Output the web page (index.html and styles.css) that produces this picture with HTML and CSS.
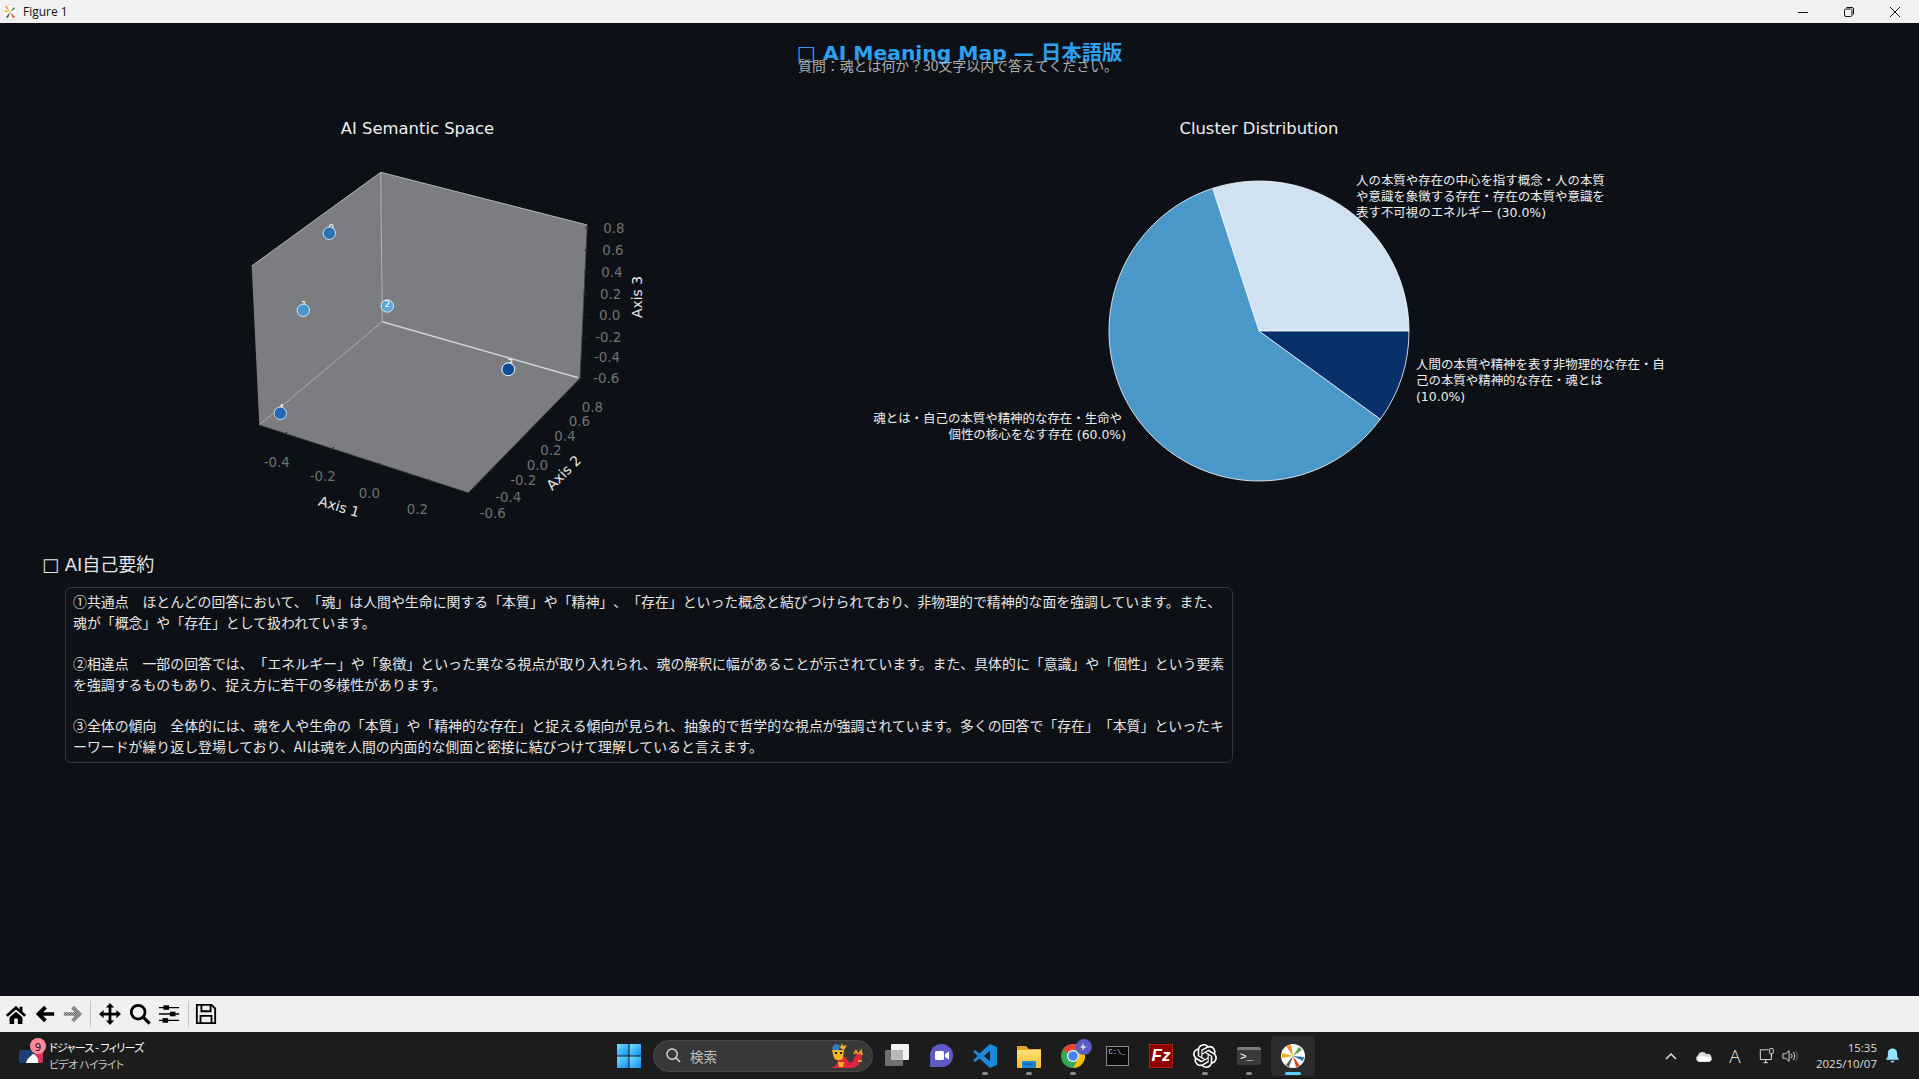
FILE: index.html
```html
<!DOCTYPE html>
<html lang="ja">
<head>
    <meta charset="UTF-8">
    <meta name="viewport" content="width=device-width, initial-scale=1.0">
    <title>Figure 1</title>
    <link rel="stylesheet" href="styles.css">
</head>
<body>
<div class="window">
    <header class="titlebar">
        <svg class="app-icon" viewBox="0 0 16 16">
            <circle cx="8" cy="8" r="7.5" fill="#fff" stroke="#ccc" stroke-width="0.5"/>
            <path d="M8 8 L3 3 L5 2 Z" fill="#f28c1e"/>
            <path d="M8 8 L2 8 L3 6 Z" fill="#e8b21c"/>
            <path d="M8 8 L13 13 L11 14 Z" fill="#d9421c"/>
            <path d="M8 8 L12 3 L13 5 Z" fill="#3c8f3c"/>
            <path d="M8 8 L6 14 L4 13 Z" fill="#444"/>
        </svg>
        <span class="titlebar-name">Figure 1</span>
        <div class="window-controls">
            <div class="window-btn"><svg viewBox="0 0 10 10"><path d="M0 5.5 H10" stroke="#111"/></svg></div>
            <div class="window-btn"><svg viewBox="0 0 10 10"><rect x="0.5" y="2" width="7.5" height="7.5" rx="1.5" fill="none" stroke="#111"/><path d="M2.5 0.5 H8 a1.5 1.5 0 0 1 1.5 1.5 V7.5" fill="none" stroke="#111"/></svg></div>
            <div class="window-btn"><svg viewBox="0 0 10 10"><path d="M0 0 L10 10 M10 0 L0 10" stroke="#111"/></svg></div>
        </div>
    </header>

    <main class="figure">
        <h1 class="fig-title">□ AI Meaning Map — 日本語版</h1>
        <p class="fig-question">質問&#xFF1A;魂とは何か&#xFF1F;30文字以内で答えてください。</p>

        <div class="plots">
            <section class="plot plot-space">
                <h2 class="plot-title">AI Semantic Space</h2>
                <svg class="plot-svg" viewBox="0 140 835 385">
                    <!-- panes -->
                    <polygon class="pane" points="380.7,172.3 251.7,266 259.3,425 382.3,321.7"/>
                    <polygon class="pane" points="380.7,172.3 587.3,225 580,378.3 382.3,321.7"/>
                    <polygon class="pane" points="382.3,321.7 259.3,425 468.3,492.7 580,378.3"/>
                    <path class="edge" d="M380.7 172.3 L251.7 266 M380.7 172.3 L587.3 225 M380.7 172.3 L382.3 321.7 M382.3 321.7 L259.3 425"/>
                    <path class="edge edge-floor" d="M382.3 321.7 L580 378.3"/>
                    <path class="axis-dark" d="M587.3 225 L580 378.3 L468.3 492.7 L259.3 425"/>
                    <!-- ticks -->
                    <path class="tick" d="M585 228 H590 M584.5 250 H589.5 M584 272 H589 M583.5 294 H588.5 M583 315 H588 M582 337 H587 M581.5 358 H586.5 M578 378 H585"/>
                    <path class="tick" d="M478 485 l-3 3 M493 469 l-3 3 M508 454 l-3 3 M523 439 l-3 3 M538 424 l-3 3 M553 409 l-3 3 M567 394 l-3 3 M581 380 l-3 3"/>
                    <path class="tick" d="M287 432 l-3 3 M334 447 l-3 3 M380 463 l-3 3 M429 479 l-3 3"/>
                    <!-- tick labels -->
                    <text class="tick-label" x="614" y="232.5">0.8</text>
                    <text class="tick-label" x="613" y="254.5">0.6</text>
                    <text class="tick-label" x="612" y="276.5">0.4</text>
                    <text class="tick-label" x="610.7" y="298.5">0.2</text>
                    <text class="tick-label" x="609.7" y="319.5">0.0</text>
                    <text class="tick-label" x="608.3" y="341.5">-0.2</text>
                    <text class="tick-label" x="607" y="361.8">-0.4</text>
                    <text class="tick-label" x="606.3" y="382.5">-0.6</text>
                    <text class="tick-label" x="592.3" y="411.8">0.8</text>
                    <text class="tick-label" x="579.3" y="426.2">0.6</text>
                    <text class="tick-label" x="565" y="440.5">0.4</text>
                    <text class="tick-label" x="551" y="454.5">0.2</text>
                    <text class="tick-label" x="537.3" y="469.5">0.0</text>
                    <text class="tick-label" x="523.3" y="485.2">-0.2</text>
                    <text class="tick-label" x="508.3" y="501.8">-0.4</text>
                    <text class="tick-label" x="492.7" y="517.8">-0.6</text>
                    <text class="tick-label" x="276.7" y="466.8">-0.4</text>
                    <text class="tick-label" x="322.7" y="481.2">-0.2</text>
                    <text class="tick-label" x="369.3" y="497.8">0.0</text>
                    <text class="tick-label" x="417.3" y="513.5">0.2</text>
                    <!-- axis labels -->
                    <text class="axis-label" transform="translate(339 507) rotate(17)" y="4.5">Axis 1</text>
                    <text class="axis-label" transform="translate(564 473) rotate(-45)" y="4.5">Axis 2</text>
                    <text class="axis-label" transform="translate(637 297) rotate(-90)" y="4.5">Axis 3</text>
                    <!-- points -->
                    <text class="point-label" x="331" y="231">0</text>
                    <circle class="point" cx="329.3" cy="233.3" r="6.2" fill="#2b72b5"/>
                    <text class="point-label" x="304" y="308">1</text>
                    <circle class="point" cx="303.3" cy="310.3" r="6.2" fill="#4b97cb"/>
                    <circle class="point" cx="387.3" cy="306" r="6.2" fill="#5aa5d3"/>
                    <text class="point-label" x="387.3" y="306.5">2</text>
                    <text class="point-label" x="510" y="366">3</text>
                    <circle class="point point-strong" cx="508.3" cy="369.3" r="6.4" fill="#084d96"/>
                    <text class="point-label" x="281" y="411">4</text>
                    <circle class="point" cx="280.3" cy="413.3" r="6.2" fill="#1f6ab0"/>
                </svg>
            </section>

            <section class="plot plot-pie">
                <h2 class="plot-title">Cluster Distribution</h2>
                <svg class="plot-svg" viewBox="835 140 848 385">
                    <path class="slice" fill="#d0e1f2" d="M1259 331 L1409 331 A150 150 0 0 0 1212.65 188.34 Z"/>
                    <path class="slice" fill="#4a98c9" d="M1259 331 L1212.65 188.34 A150 150 0 1 0 1380.35 419.17 Z"/>
                    <path class="slice" fill="#08306b" d="M1259 331 L1380.35 419.17 A150 150 0 0 0 1409 331 Z"/>
                    <text class="pie-label">
                        <tspan x="1356" y="184.5">人の本質や存在の中心を指す概念・人の本質</tspan>
                        <tspan x="1356" y="200.8">や意識を象徴する存在・存在の本質や意識を</tspan>
                        <tspan x="1356" y="217">表す不可視のエネルギー (30.0%)</tspan>
                    </text>
                    <text class="pie-label">
                        <tspan x="1416" y="368.5">人間の本質や精神を表す非物理的な存在・自</tspan>
                        <tspan x="1416" y="384.5">己の本質や精神的な存在・魂とは</tspan>
                        <tspan x="1416" y="400.5">(10.0%)</tspan>
                    </text>
                    <text class="pie-label pie-label-end">
                        <tspan x="1126" y="423">魂とは・自己の本質や精神的な存在・生命や</tspan>
                        <tspan x="1126" y="439">個性の核心をなす存在 (60.0%)</tspan>
                    </text>
                </svg>
            </section>
        </div>

        <section class="summary">
            <h2 class="summary-title">□ AI自己要約</h2>
            <div class="summary-box">
                <p>①共通点&#x3000;ほとんどの回答において、「魂」は人間や生命に関する「本質」や「精神」、「存在」といった概念と結びつけられており、非物理的で精神的な面を強調しています。また、<br>魂が「概念」や「存在」として扱われています。</p>
                <p>②相違点&#x3000;一部の回答では、「エネルギー」や「象徴」といった異なる視点が取り入れられ、魂の解釈に幅があることが示されています。また、具体的に「意識」や「個性」という要素<br>を強調するものもあり、捉え方に若干の多様性があります。</p>
                <p>③全体の傾向&#x3000;全体的には、魂を人や生命の「本質」や「精神的な存在」と捉える傾向が見られ、抽象的で哲学的な視点が強調されています。多くの回答で「存在」「本質」といったキ<br>ーワードが繰り返し登場しており、AIは魂を人間の内面的な側面と密接に結びつけて理解していると言えます。</p>
            </div>
        </section>
    </main>

    <div class="toolbar">
        <svg width="0" height="0" class="defs">
            <defs>
                <pattern id="dither" width="2" height="2" patternUnits="userSpaceOnUse">
                    <rect width="1" height="1" fill="#222"/>
                    <rect x="1" y="1" width="1" height="1" fill="#222"/>
                </pattern>
                <linearGradient id="winBlue" x1="0" y1="0" x2="1" y2="1">
                    <stop offset="0" stop-color="#6fe0ff"/>
                    <stop offset="1" stop-color="#0f8cf0"/>
                </linearGradient>
                <linearGradient id="folderBody" x1="0" y1="0" x2="0" y2="1">
                    <stop offset="0" stop-color="#ffe27a"/>
                    <stop offset="1" stop-color="#f5bb30"/>
                </linearGradient>
            </defs>
        </svg>
        <div class="tool-group tool-group-nav">
            <svg class="tool" viewBox="0 0 24 24"><path d="M12 3 L1 13 l2 2 L12 7 l9 8 2-2 -4-3.6 V4 h-3 v3 Z M5 15.5 L12 9.5 l7 6 V23 h-5 v-6 h-4 v6 H5 Z"/></svg>
            <svg class="tool" viewBox="0 0 24 24"><path d="M2 12 L11 3 l3 3 -4 4 h12 v4 H10 l4 4 -3 3 Z"/></svg>
            <svg class="tool" viewBox="0 0 24 24"><path fill="url(#dither)" d="M22 12 L13 3 l-3 3 4 4 H2 v4 h12 l-4 4 3 3 Z"/></svg>
        </div>
        <div class="tool-sep"></div>
        <div class="tool-group tool-group-view">
            <svg class="tool" viewBox="0 0 24 24"><path d="M12 0 l4.5 5 h-3 v5.500 h5.500 v-3 l5 4.500 -5 4.500 v-3 h-5.500 v5.500 h3 l-4.500 5 -4.500-5 h3 v-5.500 H5 v3 L0 12 l5-4.500 v3 h5.500 V5 h-3 Z"/></svg>
            <svg class="tool" viewBox="0 0 24 24"><circle cx="10" cy="10" r="7.500" fill="none" stroke="#000" stroke-width="3"/><path d="M15.500 15.500 L22.500 22.500" stroke="#000" stroke-width="3.500"/></svg>
            <svg class="tool" viewBox="0 0 24 24"><path d="M1 5 H23 M1 12 H23 M1 19 H23" stroke="#000" stroke-width="1.500"/><rect x="6" y="2.500" width="6" height="5" /><rect x="13" y="9.500" width="6" height="5"/><rect x="5" y="16.500" width="6" height="5"/></svg>
        </div>
        <div class="tool-sep tool-sep-end"></div>
        <svg class="tool" viewBox="0 0 24 24"><path fill="none" stroke="#000" stroke-width="2" d="M2 2 H18 L22 6 V22 H2 Z"/><path fill="none" stroke="#000" stroke-width="2" d="M7 2 V9 H17 V2 M6 22 V14 H18 V22"/></svg>
    </div>

    <footer class="taskbar">
        <div class="news-widget">
            <div class="news-icon">
                <svg viewBox="0 0 24 14" class="mlb-logo"><rect width="24" height="13" rx="2" fill="#1c3f78"/><path d="M15 0 H22 a2 2 0 0 1 2 2 V11 a2 2 0 0 1 -2 2 H18 Z" fill="#d6335a"/><path d="M7 13 C8 9 10 7 12 6 C13 4 15 3 16 5 C18 7 20 9 19 13 Z" fill="#fff"/></svg>
                <span class="news-badge">9</span>
            </div>
            <div class="news-text">
                <div class="news-line">ドジャース - フィリーズ</div>
                <div class="news-line news-sub">ビデオ ハイライト</div>
            </div>
        </div>

        <div class="task-icons">
            <div class="task-cell">
                <svg class="task-icon" viewBox="0 0 23 23"><rect width="11" height="11" fill="url(#winBlue)"/><rect x="12" width="11" height="11" fill="url(#winBlue)"/><rect y="12" width="11" height="11" fill="url(#winBlue)"/><rect x="12" y="12" width="11" height="11" fill="url(#winBlue)"/></svg>
            </div>
            <div class="search-box">
                <svg class="search-icon" viewBox="0 0 16 16"><circle cx="6.500" cy="6.500" r="5.500" fill="none" stroke="#ddd" stroke-width="1.500"/><path d="M10.500 10.500 L15 15" stroke="#ddd" stroke-width="1.500"/></svg>
                <span class="search-text">検索</span>
                <svg class="search-art" viewBox="0 0 34 26">
                    <path d="M1 25 C7 24 9 21 9 15 L17 14 C18 18 20 20 23 19 C25 18 25 13 28 11 L33 11 C33 18 29 25 22 25 Z" fill="#e0263f"/>
                    <path d="M3 7 H15 L14 15 C12 18 7 18 5 15 Z" fill="#f2b522"/>
                    <path d="M3 5 L6 1 L11 2 L10 7 H4 Z" fill="#2a86c8"/>
                    <path d="M11 5 L13 0 L14 3 L18 2 L15 7 Z" fill="#f2b522"/>
                    <rect x="6" y="9" width="2" height="2" fill="#222"/>
                    <rect x="11" y="9" width="2" height="2" fill="#222"/>
                    <path d="M25 11 l2-3 2 3 M30 11 l2-3 1 4 M29 18 l4 0" stroke="#e89a20" stroke-width="2" fill="none"/>
                    <path d="M9 19 L15 19 L14 24 L10 24 Z" fill="#f2b522"/>
                </svg>
            </div>
            <div class="task-cell">
                <svg class="task-icon" viewBox="0 0 24 24"><rect y="6" width="18" height="16" rx="1" fill="#6f6f6f"/><rect x="6" width="18" height="16" rx="1" fill="#f2f2f2"/><rect x="6" y="6" width="12" height="10" fill="#b9b9b9"/></svg>
            </div>
            <div class="task-cell">
                <svg class="task-icon" viewBox="0 0 24 24"><circle cx="12.500" cy="11.500" r="11.500" fill="#5e5bc4"/><path d="M1 14 V23 H9 Z" fill="#5e5bc4"/><rect x="6" y="7" width="9" height="9" rx="1.500" fill="#fff"/><path d="M16 10 L20 7.500 V15.500 L16 13 Z" fill="#fff"/></svg>
            </div>
            <div class="task-cell is-open">
                <svg class="task-icon" viewBox="0 0 24 24"><path d="M17 0 L24 3 V21 L17 24 L6.500 14.500 L2 18 L0 16.500 L4.500 12 L0 7.500 L2 6 L6.500 9.500 Z M17 6.500 L11 12 L17 17.500 Z" fill="#1a8ad8" fill-rule="evenodd"/></svg>
            </div>
            <div class="task-cell is-open">
                <svg class="task-icon" viewBox="0 0 24 24"><path d="M0 2 H9 L12 5 H24 V9 H0 Z" fill="#e6a520"/><rect y="6" width="24" height="18" rx="1" fill="url(#folderBody)"/><rect x="5" y="17" width="14" height="7" rx="1" fill="#1a88d4"/><rect x="8" y="19.500" width="8" height="1.500" fill="#0f5fa8"/></svg>
            </div>
            <div class="task-cell is-open">
                <svg class="task-icon" viewBox="0 0 24 24"><circle cx="12" cy="12" r="12" fill="#34a853"/><path d="M12 0 A12 12 0 0 1 22.400 6 H12 A6 6 0 0 0 6.800 9 L1.600 6 A12 12 0 0 1 12 0 Z" fill="#ea4335"/><path d="M22.400 6 A12 12 0 0 1 12 24 L17.200 15 A6 6 0 0 0 17.200 9 Z" fill="#fbbc04"/><circle cx="12" cy="12" r="6" fill="#fff"/><circle cx="12" cy="12" r="4.800" fill="#4285f4"/></svg>
                <span class="chrome-badge"><svg class="chrome-spark" viewBox="0 0 8 8"><path d="M3 0 L4 3 L7 4 L4 5 L3 8 L2 5 L0 4 L2 3 Z" fill="#d8d8f5"/></svg></span>
            </div>
            <div class="task-cell">
                <div class="cmd-icon">C:\_</div>
            </div>
            <div class="task-cell">
                <div class="fz-icon">Fz</div>
            </div>
            <div class="task-cell is-open">
                <svg class="task-icon" viewBox="0 0 24 24"><path fill="#fff" d="M22.2819 9.8211a5.9847 5.9847 0 0 0-.5157-4.9108 6.0462 6.0462 0 0 0-6.5098-2.9A6.0651 6.0651 0 0 0 4.9807 4.1818a5.9847 5.9847 0 0 0-3.9977 2.9 6.0462 6.0462 0 0 0 .7427 7.0966 5.98 5.98 0 0 0 .511 4.9107 6.051 6.051 0 0 0 6.5146 2.9001A5.9847 5.9847 0 0 0 13.2599 24a6.0557 6.0557 0 0 0 5.7718-4.2058 5.9894 5.9894 0 0 0 3.9977-2.9001 6.0557 6.0557 0 0 0-.7475-7.0729zm-9.022 12.6081a4.4755 4.4755 0 0 1-2.8764-1.0408l.1419-.0804 4.7783-2.7582a.7948.7948 0 0 0 .3927-.6813v-6.7369l2.02 1.1686a.071.071 0 0 1 .038.052v5.5826a4.504 4.504 0 0 1-4.4945 4.4944zm-9.6607-4.1254a4.4708 4.4708 0 0 1-.5346-3.0137l.142.0852 4.783 2.7582a.7712.7712 0 0 0 .7806 0l5.8428-3.3685v2.3324a.0804.0804 0 0 1-.0332.0615L9.74 19.9502a4.4992 4.4992 0 0 1-6.1408-1.6464zM2.3408 7.8956a4.485 4.485 0 0 1 2.3655-1.9728V11.6a.7664.7664 0 0 0 .3879.6765l5.8144 3.3543-2.0201 1.1685a.0757.0757 0 0 1-.071 0l-4.8303-2.7865A4.504 4.504 0 0 1 2.3408 7.872zm16.5963 3.8558L13.1038 8.364 15.1192 7.2a.0757.0757 0 0 1 .071 0l4.8303 2.7913a4.4944 4.4944 0 0 1-.6765 8.1042v-5.6772a.79.79 0 0 0-.407-.667zm2.0107-3.0231l-.142-.0852-4.7735-2.7818a.7759.7759 0 0 0-.7854 0L9.409 9.2297V6.8974a.0662.0662 0 0 1 .0284-.0615l4.8303-2.7866a4.4992 4.4992 0 0 1 6.6802 4.66zM8.3065 12.863l-2.02-1.1638a.0804.0804 0 0 1-.038-.0567V6.0742a4.4992 4.4992 0 0 1 7.3757-3.4537l-.142.0805L8.704 5.459a.7948.7948 0 0 0-.3927.6813zm1.0976-2.3654l2.602-1.4998 2.6069 1.4998v2.9994l-2.5974 1.4997-2.6067-1.4997Z"/></svg>
            </div>
            <div class="task-cell is-open">
                <div class="term-icon"><span class="term-prompt">&gt;_</span></div>
            </div>
            <div class="task-cell is-active">
                <svg class="task-icon" viewBox="0 0 24 24">
                    <circle cx="12" cy="12" r="12" fill="#fff"/>
                    <path d="M12 12 L5 2 L10 1 Z" fill="#f28c1e"/>
                    <path d="M12 12 L1 9 L1 14 Z" fill="#e8b21c"/>
                    <path d="M12 12 L19 22 L15 23 Z" fill="#d9421c"/>
                    <path d="M12 12 L18 3 L21 6 Z" fill="#5ca04a"/>
                    <path d="M12 12 L8 23 L5 21 Z" fill="#555"/>
                    <path d="M12 12 L23 13 L22 17 Z" fill="#2a6fb5"/>
                </svg>
            </div>
        </div>

        <div class="tray">
            <div class="tray-cell"><svg class="tray-icon" viewBox="0 0 16 16"><path d="M3 11 L8 6 L13 11" fill="none" stroke="#eee" stroke-width="1.400"/></svg></div>
            <div class="tray-cell"><svg class="tray-cloud" viewBox="0 0 18 12"><path d="M4 12 A3.500 3.500 0 0 1 3 5.500 A5 5 0 0 1 12 4 A4 4 0 0 1 17.500 8 L17.500 9 A3 3 0 0 1 14 12 Z" fill="#d8d8d8"/><path d="M4 12 A3.500 3.500 0 0 1 4 6.500 C8 6 12 7 14 7 A3 3 0 0 1 17.500 9 A3 3 0 0 1 14 12 Z" fill="#fff"/></svg></div>
            <div class="tray-cell tray-letter">A</div>
            <div class="tray-net"><svg class="tray-net-icon" viewBox="0 0 18 18" fill="none" stroke="#eee"><path d="M11 2 H1.500 V13 H14 V8"/><path d="M5 16.500 H10 M7.500 13 V16.500"/><rect x="12" y="0.500" width="4" height="6" rx="1"/><path d="M14 6.500 V10"/></svg></div>
            <div class="tray-vol"><svg class="tray-net-icon" viewBox="0 0 18 18" fill="none" stroke="#eee"><path d="M1 6.500 H4 L8 3 V15 L4 11.500 H1 Z"/><path d="M10.500 6.500 A4 4 0 0 1 10.500 11.500 M12.500 4.500 A7 7 0 0 1 12.500 13.500"/><path d="M15 3 A9 9 0 0 1 15 15" stroke="#666"/></svg></div>
            <div class="clock">
                <div>15:35</div>
                <div>2025/10/07</div>
            </div>
            <div class="tray-bell"><svg class="tray-bell-icon" viewBox="0 0 16 16"><path d="M8 0.500 A5 5 0 0 1 13 5.500 V9 L15 12.500 H1 L3 9 V5.500 A5 5 0 0 1 8 0.500 Z" fill="#90e4ff"/><path d="M6 13.500 H10 A2 2 0 0 1 6 13.500 Z" fill="#90e4ff"/></svg></div>
        </div>
    </footer>
</div>
</body>
</html>
```

FILE: styles.css
```css
* {
    box-sizing: border-box;
}
body {
    margin: 0;
    background: #0d1117;
    font-family: "Noto Sans CJK JP", sans-serif;
    text-spacing-trim: space-all;
}
h1, h2, p {
    margin: 0;
    font-weight: normal;
}
.window {
    display: flex;
    flex-direction: column;
    width: 1919px;
    height: 1079px;
    overflow: hidden;
}

/* title bar */
.titlebar {
    display: flex;
    align-items: center;
    height: 23px;
    flex: none;
    background: #f1f1f1;
    padding-left: 2px;
}
.app-icon {
    width: 16px;
    height: 16px;
}
.titlebar-name {
    margin-left: 5px;
    font: 12px "Open Sans", sans-serif;
    color: #111;
}
.window-controls {
    display: flex;
    margin-left: auto;
    margin-right: 1px;
}
.window-btn {
    display: flex;
    justify-content: center;
    align-items: center;
    width: 46px;
    height: 23px;
}
.window-btn svg {
    width: 10px;
    height: 10px;
}

/* figure */
.figure {
    flex: 1;
    min-height: 0;
    background: #0d1117;
}
.fig-title {
    margin-top: 18px;
    height: 24px;
    text-align: center;
    font: bold 20.300px/24px "DejaVu Sans", "Noto Sans CJK JP", sans-serif;
    color: #2ea0f0;
}
.fig-question {
    margin-top: -9px;
    height: 18px;
    padding-right: 3px;
    text-align: center;
    font-size: 13.900px;
    line-height: 18px;
    color: #aeaeae;
}
.plots {
    display: flex;
    margin-top: 41px;
}
.plot-space {
    width: 835px;
}
.plot-pie {
    width: 848px;
}
.plot-title {
    height: 25px;
    text-align: center;
    font: 16.400px/27px "DejaVu Sans", sans-serif;
    color: #eeeeee;
}
.plot-svg {
    display: block;
    width: 100%;
    height: 385px;
}
.pane {
    fill: #7c7d80;
}
.edge {
    fill: none;
    stroke: #b4b5b6;
    stroke-width: 1;
}
.edge-floor {
    stroke: #d2d2d2;
    stroke-width: 1.500;
}
.axis-dark {
    fill: none;
    stroke: #3c3d40;
    stroke-width: 0.800;
}
.tick {
    fill: none;
    stroke: #222;
    stroke-width: 1;
}
.tick-label {
    font: 13.400px "DejaVu Sans", sans-serif;
    fill: #707274;
    text-anchor: middle;
}
.axis-label {
    font: 13.900px "DejaVu Sans", sans-serif;
    fill: #e6e6e6;
    text-anchor: middle;
}
.point {
    stroke: #fff;
    stroke-opacity: 0.75;
    stroke-width: 1;
}
.point-strong {
    stroke-opacity: 1;
}
.point-label {
    font: 9px "DejaVu Sans", sans-serif;
    fill: #fff;
    text-anchor: middle;
}
.slice {
    stroke: #fff;
    stroke-width: 0.800;
}
.pie-label {
    font-family: "DejaVu Sans", "Noto Sans CJK JP", sans-serif;
    font-size: 12.450px;
    fill: #eeeeee;
}
.pie-label-end {
    text-anchor: end;
}

/* summary */
.summary {
    margin-top: 27px;
    padding-left: 42px;
}
.summary-title {
    height: 25px;
    font: 18px/26px "DejaVu Sans", "Noto Sans CJK JP", sans-serif;
    color: #e6e6e6;
}
.summary-box {
    width: 1168px;
    margin: 10px 0 0 23px;
    padding: 3px 7px 5px;
    border: 1px solid #30363d;
    border-radius: 6px;
    font-size: 13.900px;
    line-height: 20.700px;
    white-space: nowrap;
    color: #e6e6e6;
}
.summary-box p {
    margin-bottom: 20.700px;
}
.summary-box p:last-child {
    margin-bottom: 0;
}

/* matplotlib toolbar */
.toolbar {
    display: flex;
    align-items: center;
    height: 36px;
    flex: none;
    padding-left: 5px;
    background: #f0f0f0;
}
.defs {
    position: absolute;
}
.tool-group {
    display: flex;
}
.tool-group-nav {
    gap: 6.500px;
}
.tool-group-view {
    gap: 7.500px;
}
.tool {
    width: 22px;
    height: 22px;
}
.tool-sep {
    width: 1px;
    height: 26px;
    background: #c4c4c4;
    margin: 0 8px 0 6px;
}
.tool-sep-end {
    margin: 0 6px 0 8px;
}

/* windows taskbar */
.taskbar {
    display: flex;
    align-items: center;
    height: 47px;
    flex: none;
    padding-left: 19px;
    background: #1c1c1c;
}
.news-widget {
    display: flex;
    width: 588px;
    height: 47px;
    align-items: center;
}
.news-icon {
    position: relative;
    width: 24px;
    height: 14px;
    margin-top: 3px;
}
.mlb-logo {
    display: block;
    width: 24px;
    height: 14px;
}
.news-badge {
    position: absolute;
    left: 11px;
    top: -12px;
    width: 16px;
    height: 16px;
    border-radius: 50%;
    background: #ff8a96;
    color: #111;
    font-size: 11px;
    line-height: 16px;
    text-align: center;
}
.news-text {
    margin-left: 6px;
    font-size: 11px;
    font-feature-settings: "palt";
    letter-spacing: -0.700px;
    line-height: 17px;
    color: #fff;
}
.news-sub {
    color: #c8c8c8;
}
.task-icons {
    display: flex;
    align-items: center;
}
.task-cell {
    position: relative;
    display: flex;
    justify-content: center;
    align-items: center;
    width: 44px;
    height: 40px;
}
.task-icon {
    width: 24px;
    height: 24px;
}
.task-cell.is-open::after,
.task-cell.is-active::after {
    content: "";
    position: absolute;
    left: 19px;
    bottom: 1px;
    width: 6px;
    height: 3px;
    border-radius: 2px;
    background: #8a8a8a;
}
.task-cell.is-active {
    background: #2a2c2e;
    border-radius: 4px;
}
.task-cell.is-active::after {
    left: 14px;
    width: 16px;
    background: #60cdff;
}
.chrome-badge {
    position: absolute;
    left: 25px;
    top: 3px;
    display: flex;
    justify-content: center;
    align-items: center;
    width: 16px;
    height: 16px;
    border-radius: 50%;
    background: #5b5bc0;
}
.chrome-spark {
    width: 8px;
    height: 8px;
}
.search-box {
    display: flex;
    align-items: center;
    width: 220px;
    height: 32px;
    margin: 0 2px;
    padding-left: 12px;
    border: 1px solid #4a4a4a;
    border-radius: 16px;
    background: #383838;
}
.search-icon {
    width: 15px;
    height: 15px;
}
.search-text {
    margin-left: 9px;
    font-size: 13.500px;
    color: #bdbdbd;
}
.search-art {
    width: 34px;
    height: 26px;
    margin-left: auto;
    margin-right: 9px;
}
.cmd-icon {
    width: 23px;
    height: 20px;
    padding: 1px 0 0 2px;
    border: 1px solid #8a8a8a;
    background: #0c0c0c;
    color: #ddd;
    font: 7px/9px "Liberation Mono", monospace;
}
.fz-icon {
    width: 24px;
    height: 24px;
    border: 1px dotted #c33;
    background: #8c0000;
    color: #fff;
    font: italic bold 17px/22px "Liberation Sans", sans-serif;
    text-align: center;
}
.term-icon {
    width: 24px;
    height: 18px;
    padding-left: 3px;
    border-top: 3px solid #7a7a7a;
    border-radius: 2px;
    background: #3a3a3a;
    color: #ddd;
}
.term-prompt {
    display: block;
    font: bold 11px/14px "Liberation Mono", monospace;
}
.tray {
    display: flex;
    align-items: center;
    margin-left: auto;
    padding-right: 15px;
}
.tray-cell {
    display: flex;
    justify-content: center;
    align-items: center;
    width: 32px;
}
.tray-icon {
    width: 16px;
    height: 16px;
}
.tray-cloud {
    width: 17px;
    height: 12px;
}
.tray-letter {
    font: 300 19px/24px "Open Sans", sans-serif;
    color: #e6e6e6;
}
.tray-net {
    display: flex;
    justify-content: center;
    width: 22px;
    margin-left: 5px;
}
.tray-vol {
    display: flex;
    justify-content: center;
    width: 24px;
}
.tray-net-icon {
    width: 16px;
    height: 16px;
}
.clock {
    width: 75px;
    text-align: right;
    font: 11.500px/16px "Open Sans", sans-serif;
    color: #dcdcdc;
}
.tray-bell {
    display: flex;
    justify-content: center;
    width: 24px;
    margin-left: 3px;
}
.tray-bell-icon {
    width: 15px;
    height: 15px;
}
```
